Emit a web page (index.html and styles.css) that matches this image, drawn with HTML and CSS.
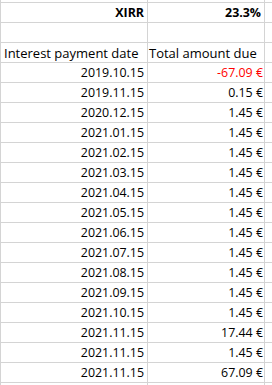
FILE: index.html
```html
<!DOCTYPE html>
<html>
<head>
<meta charset="utf-8">
<link rel="stylesheet" href="styles.css">
</head>
<body>
<div class="sheet">
  <div class="cell"></div><div class="cell"></div><div class="cell"></div>
  <div class="cell num bold">XIRR</div><div class="cell num bold">23.3%</div><div class="cell"></div>
  <div class="cell"></div><div class="cell"></div><div class="cell"></div>
  <div class="cell text">Interest payment date</div><div class="cell text">Total amount due</div><div class="cell"></div>
  <div class="cell num">2019.10.15</div><div class="cell num amt neg">-67.09 €</div><div class="cell"></div>
  <div class="cell num">2019.11.15</div><div class="cell num amt">0.15 €</div><div class="cell"></div>
  <div class="cell num">2020.12.15</div><div class="cell num amt">1.45 €</div><div class="cell"></div>
  <div class="cell num">2021.01.15</div><div class="cell num amt">1.45 €</div><div class="cell"></div>
  <div class="cell num">2021.02.15</div><div class="cell num amt">1.45 €</div><div class="cell"></div>
  <div class="cell num">2021.03.15</div><div class="cell num amt">1.45 €</div><div class="cell"></div>
  <div class="cell num">2021.04.15</div><div class="cell num amt">1.45 €</div><div class="cell"></div>
  <div class="cell num">2021.05.15</div><div class="cell num amt">1.45 €</div><div class="cell"></div>
  <div class="cell num">2021.06.15</div><div class="cell num amt">1.45 €</div><div class="cell"></div>
  <div class="cell num">2021.07.15</div><div class="cell num amt">1.45 €</div><div class="cell"></div>
  <div class="cell num">2021.08.15</div><div class="cell num amt">1.45 €</div><div class="cell"></div>
  <div class="cell num">2021.09.15</div><div class="cell num amt">1.45 €</div><div class="cell"></div>
  <div class="cell num">2021.10.15</div><div class="cell num amt">1.45 €</div><div class="cell"></div>
  <div class="cell num">2021.11.15</div><div class="cell num amt">17.44 €</div><div class="cell"></div>
  <div class="cell num">2021.11.15</div><div class="cell num amt">1.45 €</div><div class="cell"></div>
  <div class="cell num">2021.11.15</div><div class="cell num amt">67.09 €</div><div class="cell"></div>
  <div class="cell"></div><div class="cell"></div><div class="cell"></div>
</div>
</body>
</html>
```
FILE: styles.css
```css
html, body {
  margin: 0;
  padding: 0;
  background: #ffffff;
}
.sheet {
  display: grid;
  grid-template-columns: 146px 116px 1fr;
  grid-template-rows: 2px;
  grid-auto-rows: 19px;
  gap: 1px;
  background: #d4d4d4;
  border-left: 1px solid #d4d4d4;
  width: 271px;
  height: 385px;
  overflow: hidden;
  font-family: "Open Sans", sans-serif;
  color: #000000;
}
.cell {
  background: #ffffff;
  box-sizing: border-box;
  padding-top: 1px;
  line-height: 18px;
  white-space: nowrap;
  overflow: hidden;
}
.num {
  font-size: 12.4px;
  text-align: right;
  padding-right: 3px;
}
.amt {
  padding-right: 1px;
}
.bold {
  font-weight: 700;
  font-size: 12.4px;
}
.text {
  font-size: 13px;
  padding-left: 3px;
}
.text + .text {
  padding-left: 1px;
}
.neg {
  color: #ff0000;
}
```
